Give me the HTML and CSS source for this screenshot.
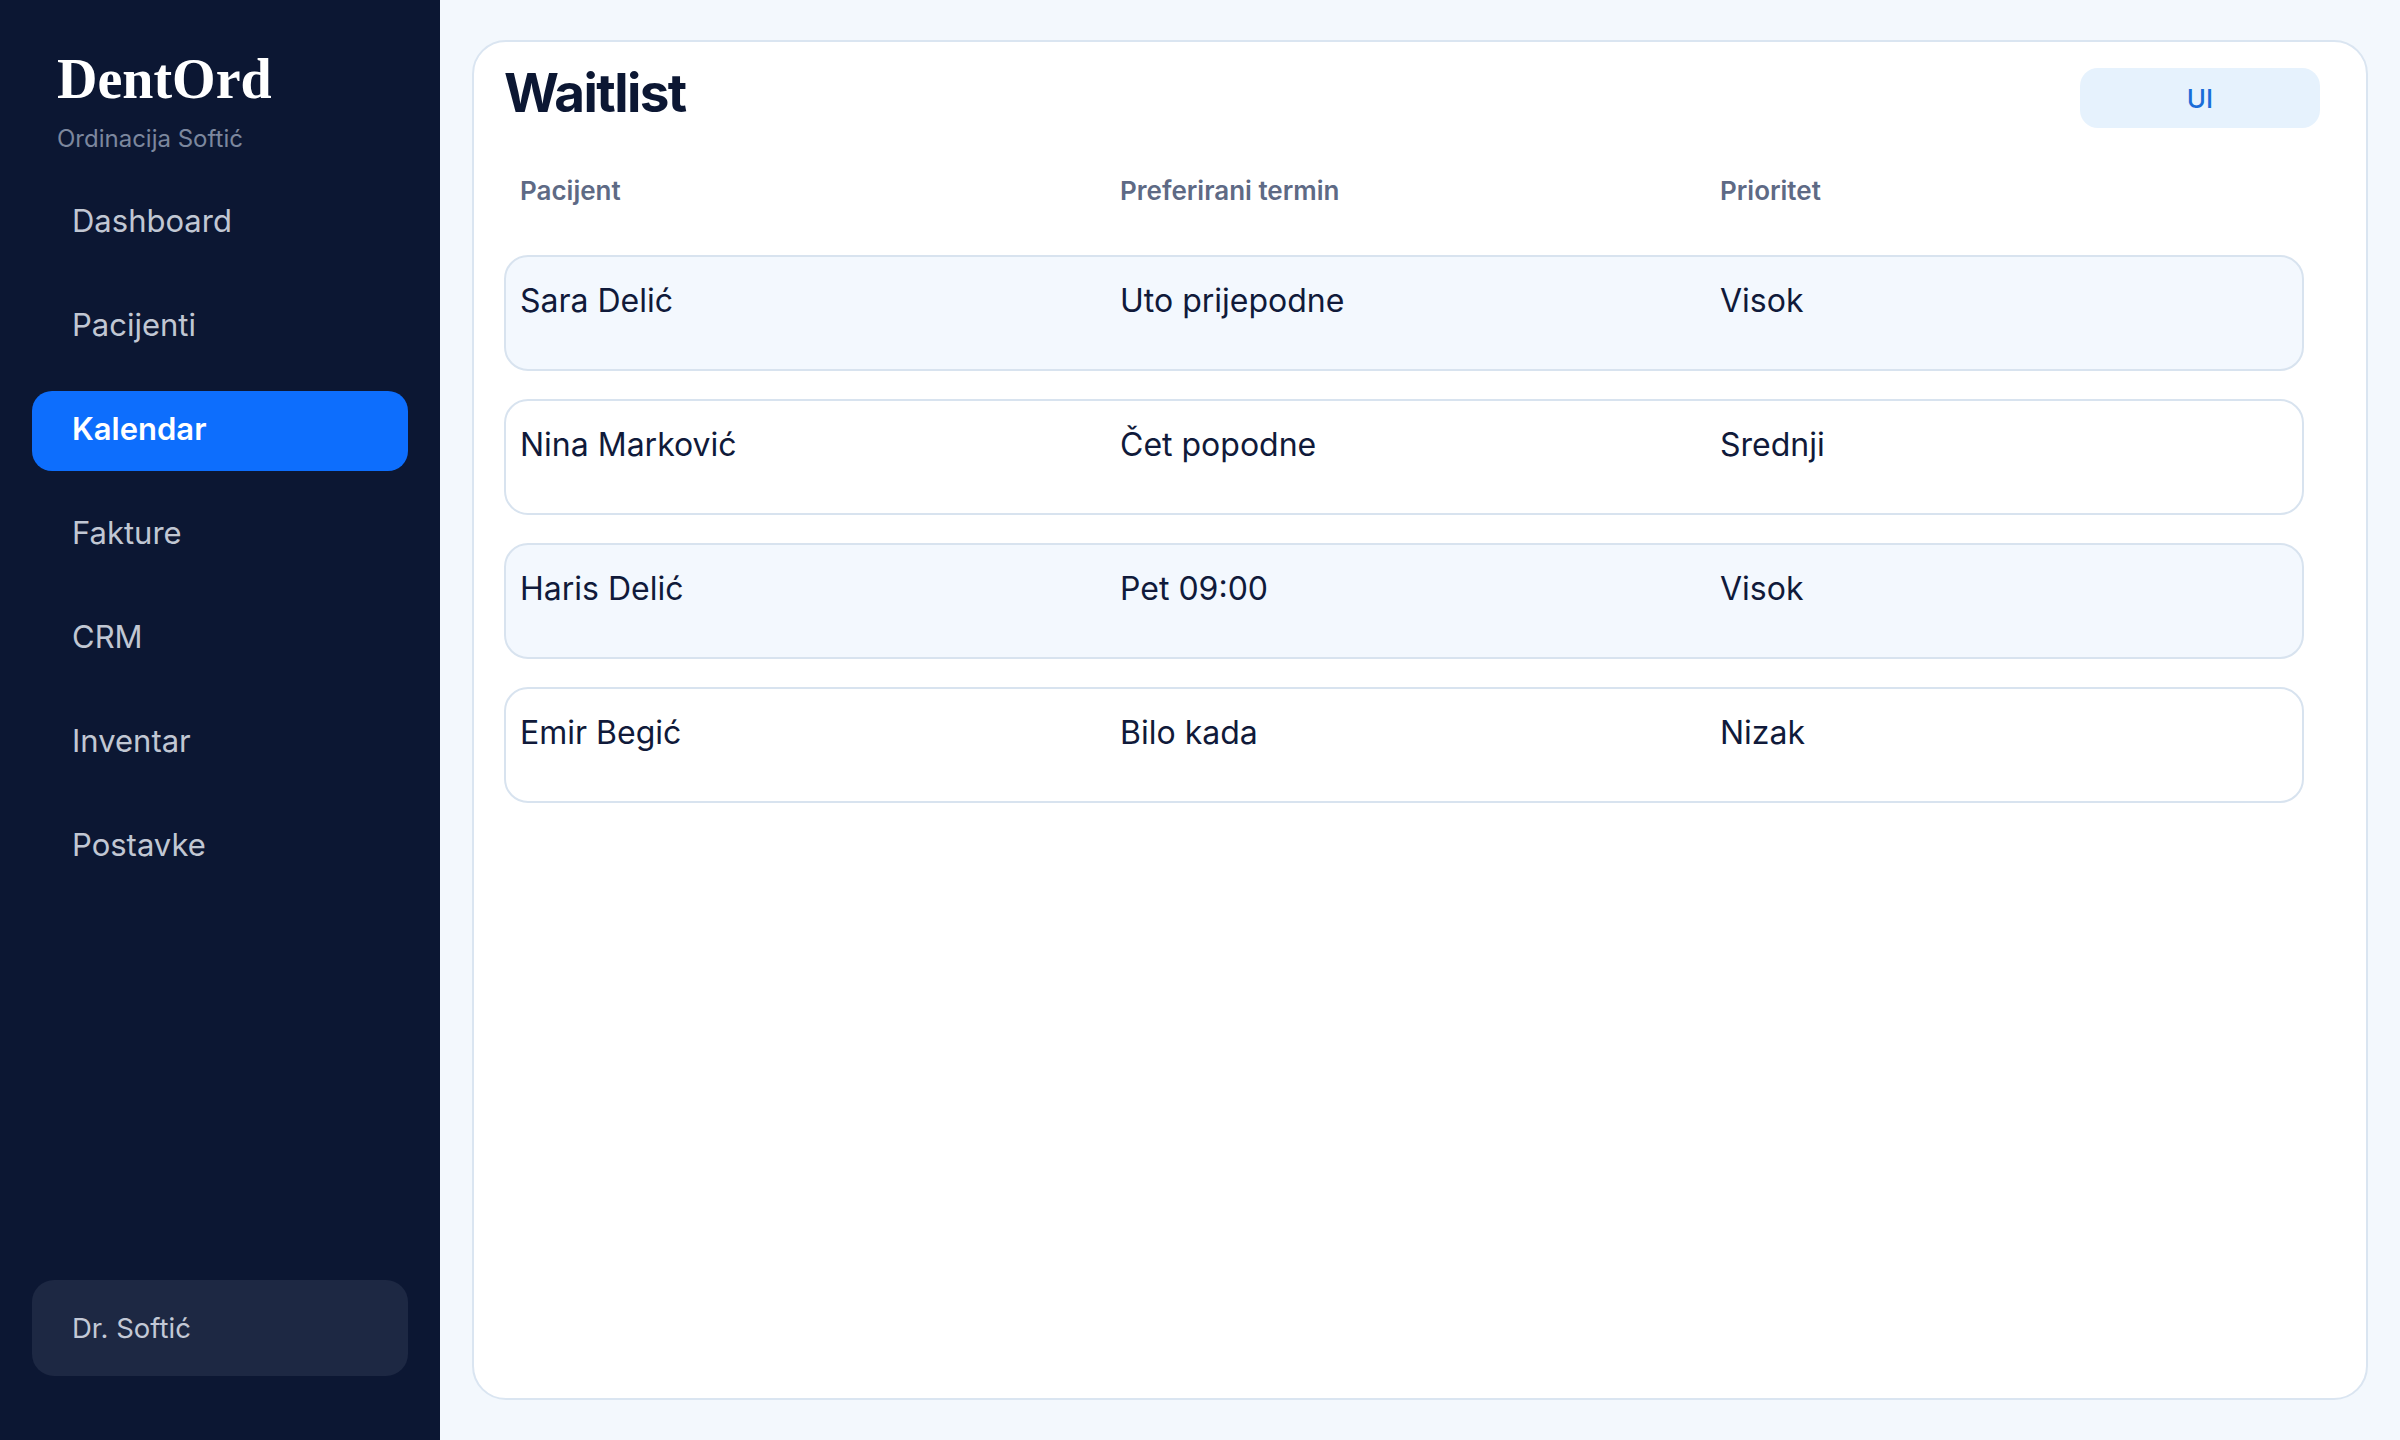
FILE: index.html
```html
<!DOCTYPE html>
<html lang="bs">
<head>
<meta charset="utf-8">
<title>DentOrd – Waitlist</title>
<link rel="stylesheet" href="styles.css">
</head>
<body>
<div class="app">
  <aside class="sidebar">
    <div class="brand">
      <div class="brand-name">DentOrd</div>
      <div class="brand-sub">Ordinacija Softić</div>
    </div>
    <nav class="nav">
      <a class="nav-item">Dashboard</a>
      <a class="nav-item">Pacijenti</a>
      <a class="nav-item is-active">Kalendar</a>
      <a class="nav-item">Fakture</a>
      <a class="nav-item">CRM</a>
      <a class="nav-item">Inventar</a>
      <a class="nav-item">Postavke</a>
    </nav>
    <div class="user-box">Dr. Softić</div>
  </aside>

  <main class="main">
    <section class="card">
      <header class="card-head">
        <h1 class="card-title">Waitlist</h1>
        <button class="ui-btn">UI</button>
      </header>

      <div class="cols-head">
        <div class="cell">Pacijent</div>
        <div class="cell">Preferirani termin</div>
        <div class="cell">Prioritet</div>
      </div>

      <div class="rows">
        <div class="row alt">
          <div class="cell">Sara Delić</div>
          <div class="cell">Uto prijepodne</div>
          <div class="cell">Visok</div>
        </div>
        <div class="row">
          <div class="cell">Nina Marković</div>
          <div class="cell">Čet popodne</div>
          <div class="cell">Srednji</div>
        </div>
        <div class="row alt">
          <div class="cell">Haris Delić</div>
          <div class="cell">Pet 09:00</div>
          <div class="cell">Visok</div>
        </div>
        <div class="row">
          <div class="cell">Emir Begić</div>
          <div class="cell">Bilo kada</div>
          <div class="cell">Nizak</div>
        </div>
      </div>
    </section>
  </main>
</div>
</body>
</html>
```

FILE: styles.css
```css
* {
  box-sizing: border-box;
}

html, body {
  margin: 0;
  padding: 0;
  height: 100%;
}

body {
  font-family: Inter, "Noto Sans", "Liberation Sans", sans-serif;
  background: #f3f8fd;
  color: #101a3a;
}

.app {
  display: flex;
  height: 1440px;
}

/* ---------- sidebar ---------- */
.sidebar {
  width: 440px;
  flex: 0 0 440px;
  background: #0c1733;
  display: flex;
  flex-direction: column;
  padding: 47px 32px 64px;
}

.brand {
  padding-left: 25px;
}

.brand-name {
  font-family: "Liberation Serif", "DejaVu Serif", serif;
  font-weight: 700;
  font-size: 56px;
  line-height: 64px;
  color: #ffffff;
}

.brand-sub {
  margin-top: 13px;
  font-size: 24px;
  line-height: 29px;
  color: #7c879e;
}

.nav {
  margin-top: 30px;
  display: flex;
  flex-direction: column;
  gap: 24px;
}

.nav-item {
  display: flex;
  align-items: center;
  height: 80px;
  padding: 0 40px 6px;
  border-radius: 20px;
  font-size: 31px;
  color: #c1c7d3;
  cursor: pointer;
}

.nav-item.is-active {
  background: #0d6efd;
  color: #ffffff;
  font-weight: 600;
}

.user-box {
  margin-top: auto;
  height: 96px;
  display: flex;
  align-items: center;
  padding: 0 40px;
  border-radius: 22px;
  background: #1d2843;
  font-size: 27.5px;
  color: #c3c9d6;
}

/* ---------- main ---------- */
.main {
  flex: 1;
  padding: 40px 32px;
  display: flex;
}

.card {
  flex: 1;
  background: #ffffff;
  border: 2px solid #dae5f1;
  border-radius: 34px;
  padding: 18px 46px 0 30px;
}

.card-head {
  display: flex;
  justify-content: space-between;
  align-items: flex-start;
}

.card-title {
  margin: 0;
  font-size: 53px;
  line-height: 66px;
  font-weight: 700;
  color: #0c1733;
  letter-spacing: -1.6px;
}

.ui-btn {
  margin-top: 8px;
  width: 240px;
  height: 60px;
  border: 0;
  border-radius: 18px;
  background: #e6f2fd;
  color: #1a6dd8;
  font-family: inherit;
  font-size: 26px;
  font-weight: 500;
}

.cols-head,
.row {
  display: grid;
  grid-template-columns: 600px 600px 1fr;
  max-width: 1800px;
}

.cols-head {
  margin-top: 47px;
  font-size: 26px;
  line-height: 31px;
  font-weight: 600;
  color: #5e6a85;
}

.cell {
  padding-left: 16px;
}

.rows {
  margin-top: 49px;
  display: flex;
  flex-direction: column;
  gap: 28px;
}

.row {
  height: 116px;
  border: 2px solid #d8e3ef;
  border-radius: 24px;
  background: #ffffff;
  padding-top: 24px;
  font-size: 32px;
  line-height: 40px;
  color: #101a3a;
}

.row .cell {
  padding-left: 14px;
}

.row.alt {
  background: #f3f8fe;
}
```
